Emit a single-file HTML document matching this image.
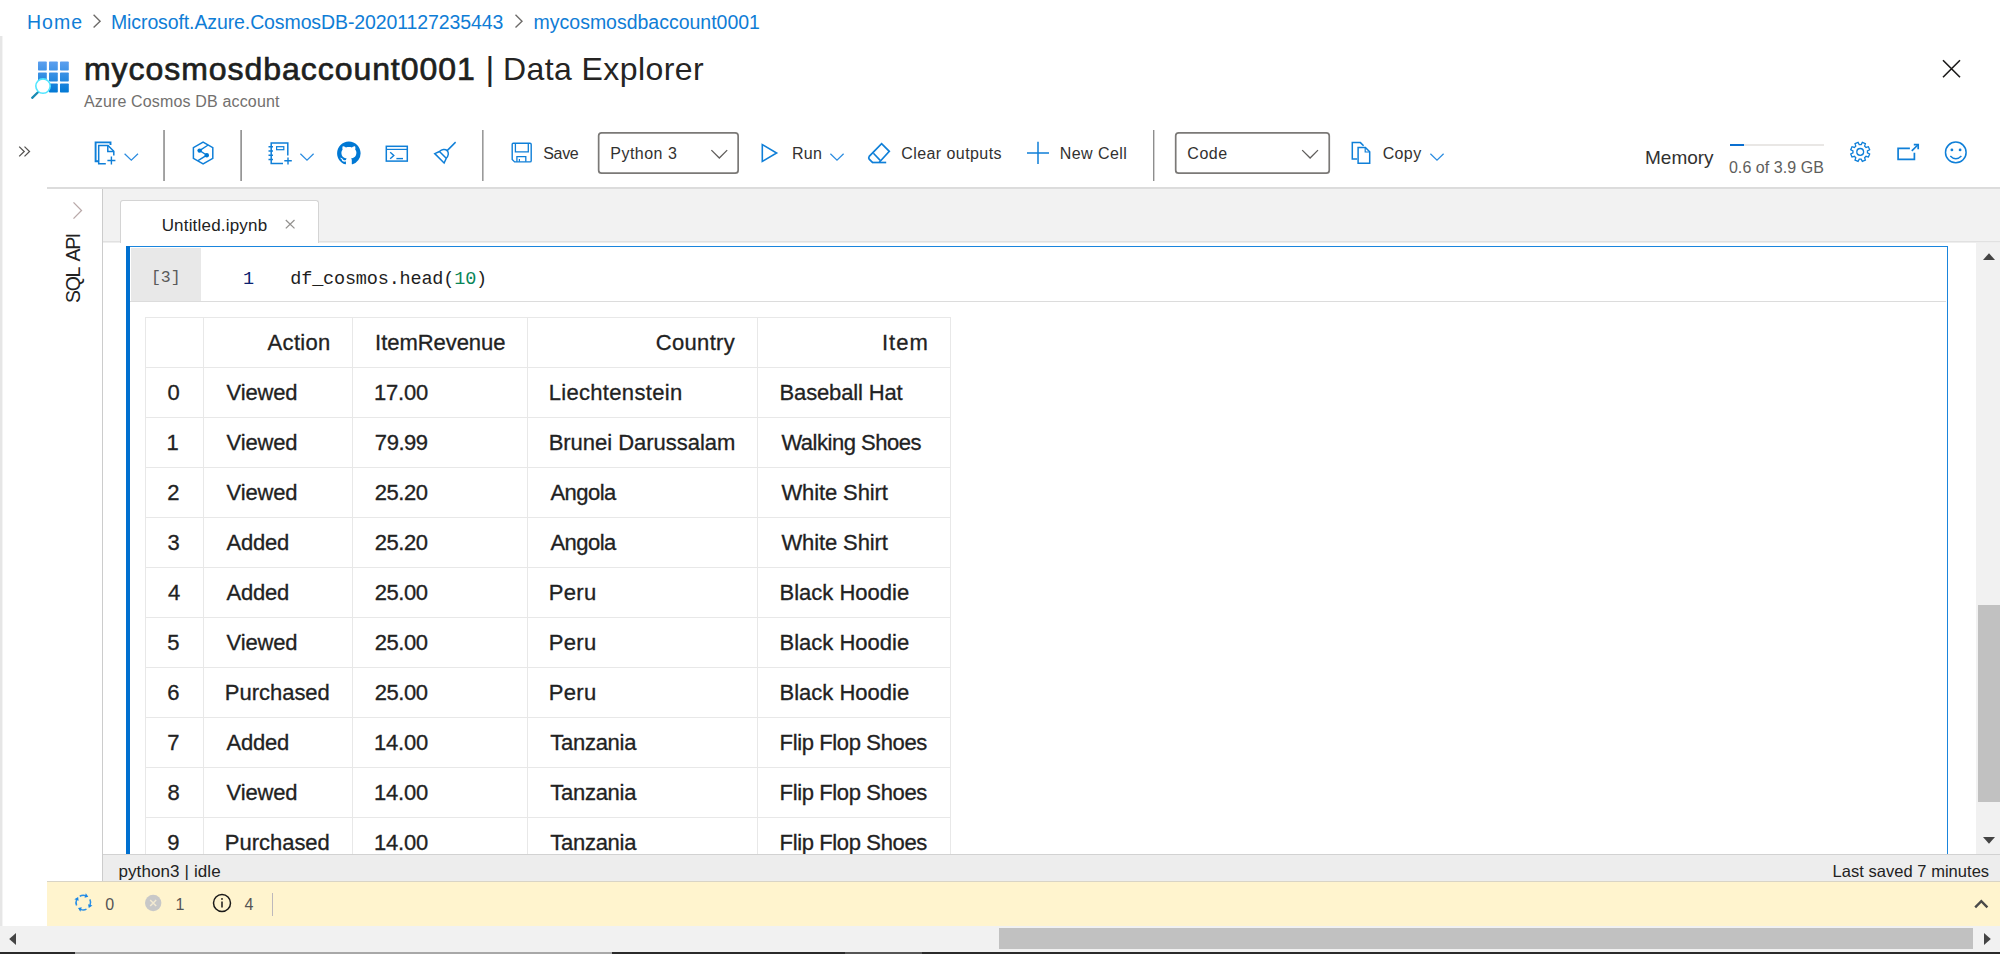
<!DOCTYPE html><html><head><meta charset="utf-8"><title>Data Explorer</title><style>
html,body{margin:0;padding:0;}
body{width:2000px;height:954px;position:relative;overflow:hidden;background:#fff;font-family:"Liberation Sans",sans-serif;}
.a{position:absolute;}
.t{position:absolute;white-space:pre;line-height:1;}
svg{position:absolute;overflow:visible;}
.sep{position:absolute;top:130px;height:51px;width:1px;}
.vl{position:absolute;width:1px;background:#e8e8e8;top:317px;height:537px;}
.hl{position:absolute;height:1px;background:#e8e8e8;left:145px;width:806px;}
</style></head><body>
<div class="a" style="left:0;top:36px;width:2px;height:890px;background:#e6e6e6"></div>
<div class="a" style="left:2px;top:36px;width:1px;height:890px;background:#f4f4f4"></div>
<div class="a" style="left:47px;top:187px;width:1953px;height:2px;background:#dcdcdc"></div>
<div class="a" style="left:102px;top:189px;width:1px;height:693px;background:#cccccc"></div>
<div class="a" style="left:103px;top:189px;width:1897px;height:52px;background:#f2f2f2"></div>
<div class="a" style="left:103px;top:241px;width:1897px;height:1px;background:#e1e1e1"></div>
<div class="a" style="left:103px;top:242px;width:1897px;height:1px;background:#eeeeee"></div>
<div class="a" style="left:120px;top:200px;width:197px;height:42px;background:#fff;border:1px solid #d4d4d4;border-bottom:none;border-radius:3px 3px 0 0"></div>
<div class="a" style="left:1976px;top:243px;width:24px;height:611px;background:#f1f1f1"></div>
<div class="a" style="left:1978px;top:605px;width:22px;height:196.5px;background:#c1c1c1"></div>
<svg style="left:1976px;top:243px" width="24" height="611"><path d="M7 17 L13 10.2 L19 17Z" fill="#444"/><path d="M7 594 L13 600.8 L19 594Z" fill="#444"/></svg>
<div class="a" style="left:126px;top:246px;width:1822px;height:608px;background:#fff"></div>
<div class="a" style="left:126px;top:246px;width:4px;height:608px;background:#0070d0"></div>
<div class="a" style="left:130px;top:246px;width:1818px;height:1.3px;background:#1a85dd"></div>
<div class="a" style="left:1946.7px;top:246px;width:1.3px;height:608px;background:#1a85dd"></div>
<div class="a" style="left:131px;top:248px;width:70px;height:52.6px;background:#e8e8e8"></div>
<div class="a" style="left:130px;top:301px;width:1816px;height:1px;background:#dcdcdc"></div>
<div class="vl" style="left:145px"></div>
<div class="vl" style="left:203px"></div>
<div class="vl" style="left:352px"></div>
<div class="vl" style="left:527px"></div>
<div class="vl" style="left:757px"></div>
<div class="vl" style="left:950px"></div>
<div class="hl" style="top:317px"></div>
<div class="hl" style="top:367px"></div>
<div class="hl" style="top:417px"></div>
<div class="hl" style="top:467px"></div>
<div class="hl" style="top:517px"></div>
<div class="hl" style="top:567px"></div>
<div class="hl" style="top:617px"></div>
<div class="hl" style="top:667px"></div>
<div class="hl" style="top:717px"></div>
<div class="hl" style="top:767px"></div>
<div class="hl" style="top:817px"></div>
<div class="a" style="left:103px;top:854px;width:1897px;height:28px;background:#ededed"></div>
<div class="a" style="left:103px;top:854px;width:1897px;height:1px;background:#d2d2d2"></div>
<div class="a" style="left:47px;top:881.6px;width:1953px;height:44.6px;background:#fff4ce"></div>
<div class="a" style="left:47px;top:881px;width:1953px;height:1px;background:#d9d4c6"></div>
<div class="a" style="left:0;top:926.3px;width:2000px;height:25.3px;background:#f1f1f1"></div>
<div class="a" style="left:999px;top:928px;width:973.6px;height:21.4px;background:#c1c1c1"></div>
<svg style="left:0;top:926px" width="2000" height="26"><path d="M16 7 L9.2 13 L16 19Z" fill="#444"/><path d="M1984 7 L1990.8 13 L1984 19Z" fill="#444"/></svg>
<div class="a" style="left:0;top:951.6px;width:2000px;height:3px;background:#2a2a2a"></div>
<div class="a" style="left:75px;top:951.6px;width:537px;height:3px;background:#a8a8a8"></div>
<div class="a" style="left:845px;top:951.6px;width:77px;height:3px;background:#555"></div>
<div class="sep" style="left:163px;background:#a8a8a8"></div><div class="sep" style="left:164px;background:#a0a0a0"></div>
<div class="sep" style="left:240px;background:#b2b2b2"></div><div class="sep" style="left:241px;background:#969696"></div>
<div class="sep" style="left:482px;background:#9a9a9a"></div><div class="sep" style="left:483px;background:#c2c2c2"></div>
<div class="sep" style="left:1153px;background:#8e8e8e"></div><div class="sep" style="left:1154px;background:#d2d2d2"></div>
<div class="a" style="left:1730px;top:144px;width:94px;height:2px;background:#e9e7e5"></div>
<div class="a" style="left:1730px;top:144px;width:14px;height:2px;background:#0a6fd0"></div>
<div class="a" style="left:272px;top:892.6px;width:1.1px;height:23.6px;background:#bdb8bc"></div>
<svg style="left:0;top:0" width="2000" height="954" viewBox="0 0 2000 954" fill="none" stroke-linecap="butt" stroke-linejoin="miter">
<defs>
<linearGradient id="gg" gradientUnits="userSpaceOnUse" x1="0" y1="61" x2="0" y2="93"><stop offset="0" stop-color="#5ea0ef"/><stop offset="1" stop-color="#0078d4"/></linearGradient>
</defs>
<!-- select boxes -->
<rect x="598.65" y="132.85" width="139.5" height="40.3" rx="3" fill="#fff" stroke="#7b7977" stroke-width="1.7"/>
<rect x="1175.7" y="132.85" width="153.55" height="40.3" rx="3" fill="#fff" stroke="#7b7977" stroke-width="1.7"/>
<!-- breadcrumb chevrons -->
<g stroke="#6e6c6a" stroke-width="1.4">
<path d="M93.6 14.8 L100.1 21.2 L93.6 27.6"/>
<path d="M515.5 14.8 L522 21.2 L515.5 27.6"/>
</g>
<!-- title icon -->
<g fill="url(#gg)" stroke="none"><rect x="38" y="61.6" width="8.8" height="8.8" rx="0.7"/><rect x="49" y="61.6" width="8.8" height="8.8" rx="0.7"/><rect x="60" y="61.6" width="8.8" height="8.8" rx="0.7"/><rect x="38" y="72.6" width="8.8" height="8.8" rx="0.7"/><rect x="49" y="72.6" width="8.8" height="8.8" rx="0.7"/><rect x="60" y="72.6" width="8.8" height="8.8" rx="0.7"/><rect x="38" y="83.6" width="8.8" height="8.8" rx="0.7"/><rect x="49" y="83.6" width="8.8" height="8.8" rx="0.7"/><rect x="60" y="83.6" width="8.8" height="8.8" rx="0.7"/></g>
<path d="M38.2 92 L32.2 97.8" stroke="#198ab3" stroke-width="2.3" stroke-linecap="round"/>
<circle cx="43" cy="86.1" r="7.2" fill="#fff" stroke="#50e6ff" stroke-width="1.6"/>
<!-- close X -->
<path d="M1943 60.3 L1960 77.3 M1960 60.3 L1943 77.3" stroke="#1b1a19" stroke-width="1.6"/>
<!-- expand chevrons -->
<g stroke="#555351" stroke-width="1.3">
<path d="M19.2 146.6 L24.2 151.5 L19.2 156.4"/><path d="M24.5 146.6 L29.5 151.5 L24.5 156.4"/>
</g>
<!-- left pane chevron -->
<path d="M73.5 202.4 L81.5 210.5 L73.5 218.6" stroke="#b9a9a9" stroke-width="1.3"/>

<g stroke="#0f7fd8" stroke-width="1.5">
<!-- new file icon -->
<path d="M98.2 161.2 H95.6 V142.4 H110.5 V145" stroke-width="1.9"/>
<path d="M105.8 163.7 H98.7 V145.4 H108 L113.8 151.2 V155.6"/>
<path d="M107.8 145.6 V151.4 H113.6"/>
<path d="M107.4 160.5 H115.4 M111.4 156.6 V164.4" stroke-width="1.4"/>
<!-- hexagon -->
<path d="M203.1 142.2 L212.8 147.7 V158.3 L203.1 163.8 L193.4 158.3 V147.7 Z" stroke-width="1.5"/>
<path d="M208.2 145 L199.6 150.6 L206.8 155.2 L198 160.6" stroke-width="1.4"/>
<circle cx="199.6" cy="150.6" r="2.2" fill="#0078d4" stroke="none"/><circle cx="206.8" cy="155.2" r="2.2" fill="#0078d4" stroke="none"/>
<!-- notebook -->
<path d="M283 163.5 H271.2 V142.9 H287.8 V155.6"/>
<path d="M268.5 146.8 H273 M268.5 151 H273 M268.5 155.2 H273 M268.5 159.4 H273" stroke-width="1.5"/>
<rect x="276.6" y="146.7" width="7.2" height="3" stroke-width="1.2"/>
<path d="M284.3 160.8 H291.8 M288 157.5 V164.4" stroke-width="1.4"/>
<!-- terminal -->
<rect x="386.3" y="146.3" width="21" height="14.8" stroke-width="1.5"/>
<path d="M386.3 149.4 H407.3" stroke-width="1.2"/>
<path d="M390.2 152.2 L393.8 155.5 L390.2 158.8" stroke-width="1.4"/>
<path d="M396.4 158.6 H403" stroke-width="1.4"/>
<!-- save -->
<path d="M513.2 143.3 H530 Q531.2 143.3 531.2 144.5 V160.7 Q531.2 161.9 530 161.9 H514.6 L512.2 159.5 V144.3 Q512.2 143.3 513.2 143.3 Z" stroke-width="1.4"/>
<path d="M515.4 143.5 V151.8 H528.3 V143.5" stroke-width="1.3"/>
<path d="M516.9 161.8 V156.6 H525.8 V161.8" stroke-width="1.3"/>
<path d="M519.4 161.8 V159" stroke-width="1.2"/>
<!-- run -->
<path d="M762.3 144.6 V161.4 L776.6 153 Z" stroke-width="1.6"/>
<!-- eraser -->
<path d="M872 162.5 H886.2" stroke-width="1.7"/>
<path d="M879.3 162.3 L889.3 151.4 L881.6 143.7 L869.2 156.4 Q868.2 157.8 869.2 159.2 L872.4 162.4" stroke-width="1.7"/>
<path d="M873.4 153.2 L880.2 160.4" stroke-width="1.6"/>
<!-- plus -->
<path d="M1027 152.9 H1049 M1038 141.8 V164" stroke-width="1.5"/>
<!-- copy -->
<path d="M1357.2 159 H1352.3 V142.6 H1360.4 L1363.6 145.8"/>
<path d="M1358.1 147.5 H1365.4 L1369.7 151.8 V163.2 H1358.1 Z"/>
<path d="M1365.2 147.8 V152 H1369.5" stroke-width="1.2"/>
<!-- open in new -->
<path d="M1909.9 148.3 H1898.1 V159.3 H1914.4 V152.8" stroke-width="1.7"/>
<path d="M1911.8 150.9 L1917.8 145" stroke-width="1.7"/>
<path d="M1913.8 144.7 H1918.2 V149.2" stroke-width="1.7"/>
<!-- smiley -->
<circle cx="1955.8" cy="152.4" r="10.3" stroke-width="1.5"/>
<path d="M1950.3 156 Q1955.8 161.6 1961.4 156" stroke-width="1.5"/>
<circle cx="1951.9" cy="149.9" r="1.4" fill="#0f7fd8" stroke="none"/><circle cx="1960.1" cy="149.9" r="1.4" fill="#0f7fd8" stroke="none"/>
</g>
<!-- broom -->
<g transform="translate(439.15 158.6) rotate(45)" stroke="#0f7fd8" stroke-width="1.5">
<path d="M0 -11.3 V-23.3"/>
<path d="M-6.6 -0.4 H6.6 L4.8 -5.2 A4.8 6.1 0 0 0 -4.8 -5.2 Z"/>
<path d="M-4.8 -5.2 H4.8"/>
</g>
<!-- chevrons (toolbar dropdown) -->
<g stroke="#2b8ce0" stroke-width="1.25">
<path d="M124.6 153.7 L131.3 160.2 L138 153.7"/>
<path d="M300.4 153.7 L307 160.2 L313.6 153.7"/>
<path d="M830.4 153.7 L837 160.2 L843.6 153.7"/>
<path d="M1430.4 153.7 L1437 160.2 L1443.6 153.7"/>
</g>
<g stroke="#605e5c" stroke-width="1.3">
<path d="M711.4 150.1 L719.3 158 L727.2 150.1"/>
<path d="M1302.2 150.1 L1310.1 158 L1318 150.1"/>
</g>
<!-- github -->
<g transform="translate(337.1 141.4) scale(1.47)">
<path fill="#0078d4" stroke="none" d="M8 0C3.58 0 0 3.58 0 8c0 3.54 2.29 6.53 5.47 7.59.4.07.55-.17.55-.38 0-.19-.01-.82-.01-1.49-2.01.37-2.53-.49-2.69-.94-.09-.23-.48-.94-.82-1.13-.28-.15-.68-.52-.01-.53.63-.01 1.08.58 1.23.82.72 1.21 1.87.87 2.33.66.07-.52.28-.87.51-1.07-1.78-.2-3.64-.89-3.64-3.95 0-.87.31-1.59.82-2.15-.08-.2-.36-1.02.08-2.12 0 0 .67-.21 2.2.82.64-.18 1.32-.27 2-.27.68 0 1.36.09 2 .27 1.53-1.04 2.2-.82 2.2-.82.44 1.1.16 1.92.08 2.12.51.56.82 1.27.82 2.15 0 3.07-1.87 3.75-3.65 3.95.29.25.54.73.54 1.48 0 1.07-.01 1.93-.01 2.2 0 .21.15.46.55.38A8.013 8.013 0 0016 8c0-4.42-3.58-8-8-8z"/>
</g>
<!-- gear -->
<g id="gear" transform="translate(1860.2 151.9)" stroke="#0f7fd8" stroke-width="1.3">
<circle r="3.4"/>
<path id="gearpath" d="M0.97 -7.24 L2.14 -9.46 L5.17 -8.20 L4.43 -5.80 L5.80 -4.43 L8.20 -5.17 L9.46 -2.14 L7.24 -0.97 L7.24 0.97 L9.46 2.14 L8.20 5.17 L5.80 4.43 L4.43 5.80 L5.17 8.20 L2.14 9.46 L0.97 7.24 L-0.97 7.24 L-2.14 9.46 L-5.17 8.20 L-4.43 5.80 L-5.80 4.43 L-8.20 5.17 L-9.46 2.14 L-7.24 0.97 L-7.24 -0.97 L-9.46 -2.14 L-8.20 -5.17 L-5.80 -4.43 L-4.43 -5.80 L-5.17 -8.20 L-2.14 -9.46 L-0.97 -7.24 Z"/>
</g>
<!-- tab close -->
<path d="M285.8 220 L294.5 228.4 M294.5 220 L285.8 228.4" stroke="#949290" stroke-width="1.3"/>
<!-- status icons -->
<g transform="translate(83.3 902.6)" stroke="#2a8fe6" stroke-width="1.5">
<path d="M-3.54 -6.38 A7.3 7.3 0 0 1 2.38 -6.90 M6.56 -3.20 A7.3 7.3 0 0 1 6.77 2.73 M3.20 6.56 A7.3 7.3 0 0 1 -2.73 6.77 M-6.72 2.85 A7.3 7.3 0 0 1 -6.62 -3.09"/>
<path d="M1.29 -4.83 L2.48 -9.27 L4.99 -5.74 Z M4.76 1.55 L9.13 2.97 L5.47 5.28 Z M-1.55 4.76 L-2.97 9.13 L-5.28 5.47 Z M-4.67 -1.79 L-8.96 -3.44 L-5.18 -5.56 Z" fill="#1a86e4" stroke="none"/>
</g>
<circle cx="153.2" cy="903" r="8.2" fill="#c8c8c8"/>
<path d="M150.2 900 L156.2 906 M156.2 900 L150.2 906" stroke="#f3ead2" stroke-width="1.5"/>
<circle cx="222" cy="903" r="8.5" stroke="#1b1a19" stroke-width="1.5"/>
<path d="M222 901.6 V907.4" stroke="#1b1a19" stroke-width="1.5"/><circle cx="222" cy="898.9" r="0.95" fill="#1b1a19"/>
<!-- yellow bar caret -->
<path d="M1975.2 907.4 L1981.3 901.2 L1987.4 907.4" stroke="#4a4a4a" stroke-width="2.4"/>
</svg>

<div class="a" style="left:0;top:0;width:2000px;height:854px;overflow:hidden">
<span class="t" style="left:26.99px;top:13.01px;font-size:19.5px;color:#0f7dd6;letter-spacing:1.024px;">Home</span>
<span class="t" style="left:110.99px;top:13.01px;font-size:19.5px;color:#0f7dd6;letter-spacing:-0.107px;">Microsoft.Azure.CosmosDB-20201127235443</span>
<span class="t" style="left:533.62px;top:13.01px;font-size:19.5px;color:#0f7dd6;letter-spacing:-0.013px;">mycosmosdbaccount0001</span>
<span class="t" style="left:84.02px;top:52.8px;font-size:32px;color:#201f1e;letter-spacing:0.948px;-webkit-text-stroke:0.7px #201f1e;">mycosmosdbaccount0001</span>
<span class="t" style="left:485.54px;top:51.0px;font-size:34px;color:#252423;">|</span>
<span class="t" style="left:502.98px;top:52.8px;font-size:32px;color:#252423;letter-spacing:0.417px;">Data Explorer</span>
<span class="t" style="left:83.91px;top:94.27px;font-size:16px;color:#72706e;letter-spacing:0.157px;">Azure Cosmos DB account</span>
<span class="t" style="left:543.28px;top:146.07px;font-size:16px;color:#323130;letter-spacing:-0.33px;">Save</span>
<span class="t" style="left:610.24px;top:146.07px;font-size:16px;color:#323130;letter-spacing:0.494px;">Python 3</span>
<span class="t" style="left:792.04px;top:146.07px;font-size:16px;color:#323130;letter-spacing:0.198px;">Run</span>
<span class="t" style="left:901.17px;top:146.07px;font-size:16px;color:#323130;letter-spacing:0.437px;">Clear outputs</span>
<span class="t" style="left:1059.64px;top:146.07px;font-size:16px;color:#323130;letter-spacing:0.456px;">New Cell</span>
<span class="t" style="left:1187.32px;top:146.07px;font-size:16px;color:#323130;letter-spacing:0.545px;">Code</span>
<span class="t" style="left:1382.67px;top:146.07px;font-size:16px;color:#323130;letter-spacing:0.376px;">Copy</span>
<span class="t" style="left:1644.99px;top:147.62px;font-size:19px;color:#323130;">Memory</span>
<span class="t" style="left:1728.92px;top:160.07px;font-size:16px;color:#605e5c;letter-spacing:0.063px;">0.6 of 3.9 GB</span>
<span class="t" style="left:161.64px;top:217.49px;font-size:17px;color:#222;letter-spacing:0.191px;">Untitled.ipynb</span>
<span class="t" style="left:151.04px;top:269.67px;font-size:16.5px;color:#5a5a5a;font-family:'Liberation Mono',monospace;letter-spacing:-0.061px;">[3]</span>
<span class="t" style="left:243.01px;top:271.02px;font-size:18.5px;color:#0b216f;font-family:'Liberation Mono',monospace;">1</span>
<span class="t" style="left:290.27px;top:271.02px;font-size:18.5px;color:#1e1e1e;font-family:'Liberation Mono',monospace;letter-spacing:-0.172px;">df_cosmos.head(<span style="color:#098658">10</span>)</span>
<span class="t" style="left:267.6px;top:331.84px;font-size:22px;color:#222;letter-spacing:0.307px;-webkit-text-stroke:0.3px #222;">Action</span>
<span class="t" style="left:375.1px;top:331.84px;font-size:22px;color:#222;letter-spacing:-0.052px;-webkit-text-stroke:0.3px #222;">ItemRevenue</span>
<span class="t" style="left:655.84px;top:331.84px;font-size:22px;color:#222;letter-spacing:0.305px;-webkit-text-stroke:0.3px #222;">Country</span>
<span class="t" style="left:881.9px;top:331.84px;font-size:22px;color:#222;letter-spacing:1.058px;-webkit-text-stroke:0.3px #222;">Item</span>
<span class="t" style="left:167.44px;top:381.84px;font-size:22px;color:#222;-webkit-text-stroke:0.3px #222;">0</span>
<span class="t" style="left:226.57px;top:381.84px;font-size:22px;color:#222;letter-spacing:-0.156px;-webkit-text-stroke:0.3px #222;">Viewed</span>
<span class="t" style="left:373.99px;top:381.84px;font-size:22px;color:#222;letter-spacing:-0.186px;-webkit-text-stroke:0.3px #222;">17.00</span>
<span class="t" style="left:548.67px;top:381.84px;font-size:22px;color:#222;letter-spacing:0.32px;-webkit-text-stroke:0.3px #222;">Liechtenstein</span>
<span class="t" style="left:779.57px;top:381.84px;font-size:22px;color:#222;letter-spacing:-0.147px;-webkit-text-stroke:0.3px #222;">Baseball Hat</span>
<span class="t" style="left:166.49px;top:431.84px;font-size:22px;color:#222;-webkit-text-stroke:0.3px #222;">1</span>
<span class="t" style="left:226.57px;top:431.84px;font-size:22px;color:#222;letter-spacing:-0.156px;-webkit-text-stroke:0.3px #222;">Viewed</span>
<span class="t" style="left:374.86px;top:431.84px;font-size:22px;color:#222;letter-spacing:-0.46px;-webkit-text-stroke:0.3px #222;">79.99</span>
<span class="t" style="left:548.67px;top:431.84px;font-size:22px;color:#222;letter-spacing:-0.02px;-webkit-text-stroke:0.3px #222;">Brunei Darussalam</span>
<span class="t" style="left:781.4px;top:431.84px;font-size:22px;color:#222;letter-spacing:-0.476px;-webkit-text-stroke:0.3px #222;">Walking Shoes</span>
<span class="t" style="left:167.37px;top:481.84px;font-size:22px;color:#222;-webkit-text-stroke:0.3px #222;">2</span>
<span class="t" style="left:226.57px;top:481.84px;font-size:22px;color:#222;letter-spacing:-0.156px;-webkit-text-stroke:0.3px #222;">Viewed</span>
<span class="t" style="left:374.87px;top:481.84px;font-size:22px;color:#222;letter-spacing:-0.501px;-webkit-text-stroke:0.3px #222;">25.20</span>
<span class="t" style="left:550.5px;top:481.84px;font-size:22px;color:#222;letter-spacing:-0.552px;-webkit-text-stroke:0.3px #222;">Angola</span>
<span class="t" style="left:781.4px;top:481.84px;font-size:22px;color:#222;letter-spacing:-0.106px;-webkit-text-stroke:0.3px #222;">White Shirt</span>
<span class="t" style="left:167.4px;top:531.84px;font-size:22px;color:#222;-webkit-text-stroke:0.3px #222;">3</span>
<span class="t" style="left:226.6px;top:531.84px;font-size:22px;color:#222;letter-spacing:-0.266px;-webkit-text-stroke:0.3px #222;">Added</span>
<span class="t" style="left:374.87px;top:531.84px;font-size:22px;color:#222;letter-spacing:-0.501px;-webkit-text-stroke:0.3px #222;">25.20</span>
<span class="t" style="left:550.5px;top:531.84px;font-size:22px;color:#222;letter-spacing:-0.552px;-webkit-text-stroke:0.3px #222;">Angola</span>
<span class="t" style="left:781.4px;top:531.84px;font-size:22px;color:#222;letter-spacing:-0.106px;-webkit-text-stroke:0.3px #222;">White Shirt</span>
<span class="t" style="left:168.09px;top:581.84px;font-size:22px;color:#222;-webkit-text-stroke:0.3px #222;">4</span>
<span class="t" style="left:226.6px;top:581.84px;font-size:22px;color:#222;letter-spacing:-0.266px;-webkit-text-stroke:0.3px #222;">Added</span>
<span class="t" style="left:374.87px;top:581.84px;font-size:22px;color:#222;letter-spacing:-0.501px;-webkit-text-stroke:0.3px #222;">25.00</span>
<span class="t" style="left:548.67px;top:581.84px;font-size:22px;color:#222;letter-spacing:0.331px;-webkit-text-stroke:0.3px #222;">Peru</span>
<span class="t" style="left:779.57px;top:581.84px;font-size:22px;color:#222;letter-spacing:-0.006px;-webkit-text-stroke:0.3px #222;">Black Hoodie</span>
<span class="t" style="left:167.3px;top:631.84px;font-size:22px;color:#222;-webkit-text-stroke:0.3px #222;">5</span>
<span class="t" style="left:226.57px;top:631.84px;font-size:22px;color:#222;letter-spacing:-0.156px;-webkit-text-stroke:0.3px #222;">Viewed</span>
<span class="t" style="left:374.87px;top:631.84px;font-size:22px;color:#222;letter-spacing:-0.501px;-webkit-text-stroke:0.3px #222;">25.00</span>
<span class="t" style="left:548.67px;top:631.84px;font-size:22px;color:#222;letter-spacing:0.331px;-webkit-text-stroke:0.3px #222;">Peru</span>
<span class="t" style="left:779.57px;top:631.84px;font-size:22px;color:#222;letter-spacing:-0.006px;-webkit-text-stroke:0.3px #222;">Black Hoodie</span>
<span class="t" style="left:167.34px;top:681.84px;font-size:22px;color:#222;-webkit-text-stroke:0.3px #222;">6</span>
<span class="t" style="left:224.77px;top:681.84px;font-size:22px;color:#222;letter-spacing:-0.015px;-webkit-text-stroke:0.3px #222;">Purchased</span>
<span class="t" style="left:374.87px;top:681.84px;font-size:22px;color:#222;letter-spacing:-0.501px;-webkit-text-stroke:0.3px #222;">25.00</span>
<span class="t" style="left:548.67px;top:681.84px;font-size:22px;color:#222;letter-spacing:0.331px;-webkit-text-stroke:0.3px #222;">Peru</span>
<span class="t" style="left:779.57px;top:681.84px;font-size:22px;color:#222;letter-spacing:-0.006px;-webkit-text-stroke:0.3px #222;">Black Hoodie</span>
<span class="t" style="left:167.36px;top:731.84px;font-size:22px;color:#222;-webkit-text-stroke:0.3px #222;">7</span>
<span class="t" style="left:226.6px;top:731.84px;font-size:22px;color:#222;letter-spacing:-0.266px;-webkit-text-stroke:0.3px #222;">Added</span>
<span class="t" style="left:373.99px;top:731.84px;font-size:22px;color:#222;letter-spacing:-0.186px;-webkit-text-stroke:0.3px #222;">14.00</span>
<span class="t" style="left:550.34px;top:731.84px;font-size:22px;color:#222;letter-spacing:-0.286px;-webkit-text-stroke:0.3px #222;">Tanzania</span>
<span class="t" style="left:779.57px;top:731.84px;font-size:22px;color:#222;letter-spacing:-0.368px;-webkit-text-stroke:0.3px #222;">Flip Flop Shoes</span>
<span class="t" style="left:167.41px;top:781.84px;font-size:22px;color:#222;-webkit-text-stroke:0.3px #222;">8</span>
<span class="t" style="left:226.57px;top:781.84px;font-size:22px;color:#222;letter-spacing:-0.156px;-webkit-text-stroke:0.3px #222;">Viewed</span>
<span class="t" style="left:373.99px;top:781.84px;font-size:22px;color:#222;letter-spacing:-0.186px;-webkit-text-stroke:0.3px #222;">14.00</span>
<span class="t" style="left:550.34px;top:781.84px;font-size:22px;color:#222;letter-spacing:-0.286px;-webkit-text-stroke:0.3px #222;">Tanzania</span>
<span class="t" style="left:779.57px;top:781.84px;font-size:22px;color:#222;letter-spacing:-0.368px;-webkit-text-stroke:0.3px #222;">Flip Flop Shoes</span>
<span class="t" style="left:167.36px;top:831.84px;font-size:22px;color:#222;-webkit-text-stroke:0.3px #222;">9</span>
<span class="t" style="left:224.77px;top:831.84px;font-size:22px;color:#222;letter-spacing:-0.015px;-webkit-text-stroke:0.3px #222;">Purchased</span>
<span class="t" style="left:373.99px;top:831.84px;font-size:22px;color:#222;letter-spacing:-0.186px;-webkit-text-stroke:0.3px #222;">14.00</span>
<span class="t" style="left:550.34px;top:831.84px;font-size:22px;color:#222;letter-spacing:-0.286px;-webkit-text-stroke:0.3px #222;">Tanzania</span>
<span class="t" style="left:779.57px;top:831.84px;font-size:22px;color:#222;letter-spacing:-0.368px;-webkit-text-stroke:0.3px #222;">Flip Flop Shoes</span>
</div>
<span class="t" style="left:118.39px;top:862.89px;font-size:17px;color:#222;letter-spacing:0.115px;">python3 | idle</span>
<span class="t" style="left:1832.59px;top:862.95px;font-size:16.5px;color:#222;letter-spacing:0.031px;">Last saved 7 minutes</span>
<span class="t" style="left:105.27px;top:897.17px;font-size:16px;color:#555;">0</span>
<span class="t" style="left:175.41px;top:897.17px;font-size:16px;color:#555;">1</span>
<span class="t" style="left:244.48px;top:897.17px;font-size:16px;color:#555;">4</span>
<span class="t" id="sqlapi" style="left:83.3px;top:302.5px;font-size:19.5px;color:#222;transform-origin:0 0;transform:rotate(-90deg) translateY(-100%);letter-spacing:-1.3px;word-spacing:4px">SQL API</span>
</body></html>
